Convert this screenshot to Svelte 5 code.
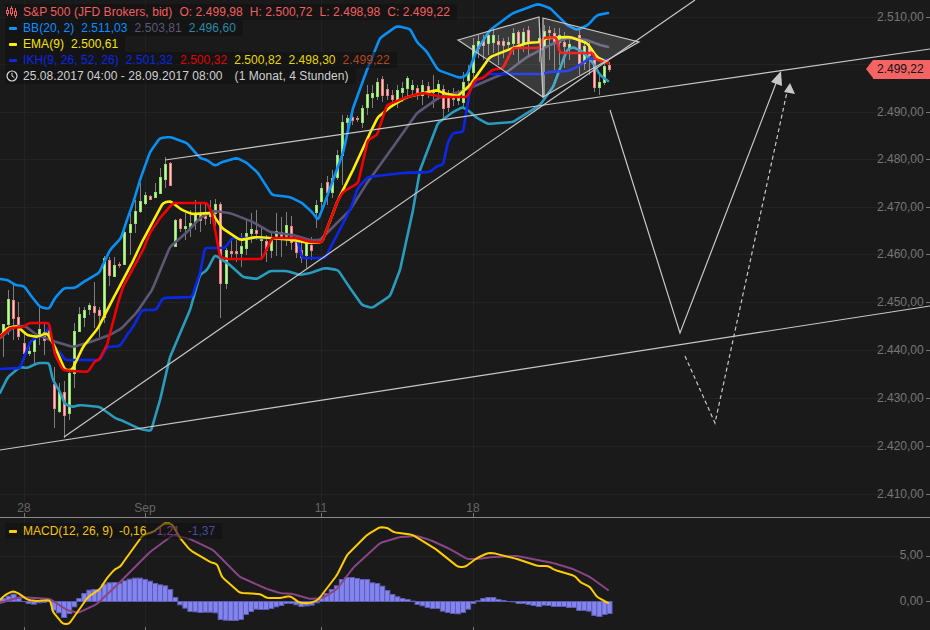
<script>
  const round = (a, d = 2.5) => {
    const o = [a[0]];
    for (let i = 1; i < a.length - 1; i++) {
      const [px, py] = a[i - 1];
      const [x, y] = a[i];
      const [nx, ny] = a[i + 1];
      const l0 = Math.hypot(x - px, y - py);
      const l1 = Math.hypot(nx - x, ny - y);
      const d0 = Math.min(d, l0 / 2) / l0;
      const d1 = Math.min(d, l1 / 2) / l1;
      o.push([x + (px - x) * d0, y + (py - y) * d0]);
      o.push([x, y].map((v, k) => (v * 2 + (k ? y + (py - y) * d0 + y + (ny - y) * d1 : x + (px - x) * d0 + x + (nx - x) * d1)) / 4));
      o.push([x + (nx - x) * d1, y + (ny - y) * d1]);
    }
    o.push(a[a.length - 1]);
    return o;
  };
  const pts = (a) => round(a).map((p) => p[0].toFixed(1) + ',' + p[1].toFixed(1)).join(' ');
  const cx = (i) => 3.3 + 5.05 * i;

  const bbUp = [[0,279],[8,280],[15,285],[24,286],[32,297],[40,307],[49,309],[55,298],[64,288],[75,288],[85,281],[99,273],[110,250],[121,238],[127,220],[134,200],[140,180],[150,152],[160,138],[170,137],[187,143],[200,158],[207,160],[215,166],[222,162],[237,158],[247,163],[258,173],[272,195],[290,197],[302,203],[312,212],[318,220],[322,210],[343,153],[353,108],[367,70],[380,38],[397,26],[410,29],[417,42],[427,52],[438,70],[460,78],[467,75],[477,50],[490,30],[513,13],[538,4],[550,8],[567,25],[577,30],[588,25],[597,15],[608,13]];
  const bbMid = [[0,338],[15,326],[25,326],[37,335],[53,341],[73,347],[90,342],[110,335],[122,328],[137,312],[152,290],[170,247],[187,232],[200,218],[213,211],[230,213],[253,222],[270,232],[293,235],[310,240],[320,240],[335,225],[350,210],[367,183],[393,147],[417,113],[440,97],[460,92],[477,85],[507,72],[527,57],[550,45],[567,38],[587,40],[600,45],[608,47]];
  const bbLow = [[0,393],[8,377],[20,367],[27,368],[38,363],[49,363],[53,380],[60,392],[65,404],[72,407],[80,405],[100,407],[115,418],[123,421],[140,429],[151,431],[160,400],[170,357],[190,310],[200,275],[207,270],[215,255],[230,265],[243,277],[257,279],[270,271],[287,271],[300,275],[310,273],[325,268],[338,270],[350,288],[362,305],[372,308],[390,296],[400,270],[413,210],[420,170],[438,123],[453,112],[463,107],[470,112],[477,118],[488,124],[513,122],[540,105],[553,87],[567,50],[573,47],[583,52],[593,63],[600,75],[608,81]];
  const ema = [[0,337],[7,328],[17,326],[27,335],[37,337],[47,333],[55,347],[65,370],[72,370],[83,347],[98,328],[115,295],[132,263],[143,240],[163,203],[170,201],[182,210],[192,214],[212,213],[222,228],[240,240],[257,237],[270,238],[293,240],[310,243],[322,242],[338,200],[353,170],[370,133],[378,117],[393,105],[407,97],[437,90],[443,93],[458,96],[470,85],[490,57],[513,48],[527,43],[540,42],[547,38],[570,37],[587,43],[597,57],[608,63]];
  const red = [[0,337],[10,328],[23,327],[29,323],[49,323],[55,355],[63,370],[73,371],[88,372],[95,361],[99,360],[107,345],[118,303],[123,287],[143,250],[150,233],[160,218],[173,203],[207,203],[212,213],[220,257],[227,259],[262,259],[272,238],[297,238],[310,242],[322,242],[338,200],[343,192],[358,183],[368,140],[377,135],[387,105],[407,97],[423,93],[443,97],[467,97],[475,80],[483,78],[492,70],[503,68],[513,48],[540,48],[543,38],[556,37],[560,53],[593,53],[595,59],[608,63]];
  const blueA = [[0,369],[20,368],[30,342],[37,337],[45,335],[49,327]];
  const blueB = [[55,352],[60,352],[65,360],[100,360],[107,347],[120,346],[127,335],[133,327],[142,310],[156,310],[163,298],[192,297],[200,273],[205,248],[225,248],[232,238],[297,238],[302,258],[325,258],[350,210],[358,188],[368,177],[403,173],[430,172],[437,166],[443,165],[448,142],[453,133],[463,132],[470,90],[477,80],[483,78],[488,74],[543,74],[548,72],[568,71],[577,67],[590,58],[608,60]];

  const candles = [
    [0,324,324,335,357,'g'],[1,290,299,324,335,'g'],[2,283,300,318,340,'r'],[3,302,317,336,340,'r'],[4,333,343,353,360,'r'],[5,346,351,353,356,'g'],[6,335,339,351,363,'g'],[7,307,329,335,345,'g'],[8,322,332,340,355,'r'],[9,325,327,333,340,'g'],
    [10,367,384,408,428,'r'],[11,383,392,411,413,'g'],[12,381,392,415,438,'r'],[13,370,373,413,420,'g'],[14,323,331,373,388,'g'],[15,307,314,331,332,'g'],[16,307,310,317,327,'g'],[17,303,305,309,315,'g'],[18,282,306,312,328,'r'],[19,307,310,315,337,'r'],
    [20,256,258,317,323,'g'],[21,257,260,275,286,'r'],[22,257,265,276,277,'g'],[23,262,264,265,268,'r'],[24,231,232,264,265,'g'],[25,213,224,232,255,'g'],[26,200,211,223,233,'g'],[27,183,201,211,213,'g'],[28,192,195,203,205,'g'],[29,195,196,199,200,'r'],
    [30,183,192,197,198,'g'],[31,168,177,193,194,'g'],[32,157,164,179,188,'g'],[33,162,163,185,186,'r'],[34,219,220,246,247,'g'],[35,218,219,228,232,'r'],[36,213,226,228,240,'g'],[37,210,223,227,237,'g'],[38,200,213,222,230,'g'],[39,202,213,220,232,'r'],
    [40,202,213,218,225,'r'],[41,200,212,216,224,'g'],[42,199,204,213,226,'g'],[43,202,204,283,318,'r'],[44,248,250,283,289,'g'],[45,240,251,253,258,'r'],[46,240,251,253,262,'r'],[47,233,246,253,267,'g'],[48,220,233,248,255,'g'],[49,213,229,233,243,'g'],
    [50,210,230,233,240,'r'],[51,227,238,240,260,'g'],[52,235,241,250,262,'r'],[53,231,240,250,258,'g'],[54,213,231,237,256,'g'],[55,217,232,236,257,'r'],[56,212,225,238,246,'g'],[57,216,226,242,250,'r'],[58,236,242,252,258,'r'],[59,243,250,257,263,'r'],
    [60,238,243,255,268,'g'],[61,237,245,250,260,'r'],[62,200,205,212,228,'g'],[63,183,188,201,210,'g'],[64,176,182,192,205,'r'],[65,170,178,192,198,'g'],[66,150,155,177,180,'g'],[67,115,122,155,185,'g'],[68,115,118,122,132,'g'],[69,112,117,120,125,'r'],
    [70,116,118,119,122,'r'],[71,105,108,122,128,'g'],[72,85,94,107,115,'g'],[73,85,93,97,108,'g'],[74,78,82,96,100,'g'],[75,76,79,95,102,'r'],[76,84,89,95,100,'r'],[77,90,95,99,105,'r'],[78,85,90,100,108,'g'],[79,82,88,92,102,'g'],
    [80,76,78,88,97,'g'],[81,80,85,89,96,'g'],[82,85,88,92,100,'r'],[83,80,85,95,105,'g'],[84,82,86,93,98,'r'],[85,75,90,92,108,'g'],[86,80,84,91,100,'g'],[87,85,89,108,118,'r'],[88,90,93,107,112,'r'],[89,88,95,99,106,'r'],
    [90,90,97,100,105,'g'],[91,72,82,102,108,'g'],[92,65,72,80,85,'g'],[93,38,45,72,80,'g'],[94,35,41,48,58,'g'],[95,35,40,45,60,'r'],[96,30,35,43,55,'g'],[97,28,35,42,53,'g'],[98,35,41,44,65,'r'],[99,38,41,45,58,'r'],
    [100,37,42,44,48,'g'],[101,28,33,43,55,'g'],[102,30,32,43,62,'r'],[103,28,32,43,52,'g'],[104,26,30,41,55,'r'],[106,30,38,42,62,'g'],[107,25,31,47,100,'g'],[108,26,30,32,60,'r'],[109,28,33,41,70,'r'],
    [110,28,35,42,65,'g'],[111,32,42,46,68,'r'],[112,36,44,48,60,'g'],[114,30,35,63,75,'r'],[115,40,46,63,70,'g'],[116,42,47,55,75,'r'],[117,55,60,87,92,'r'],[118,75,82,87,95,'g'],[119,62,66,82,85,'g'],[120,62,65,69,72,'r']
  ];

  const yTicks = [[2510,17],[2490,112],[2480,159],[2470,207],[2460,254],[2450,302],[2440,350],[2430,398],[2420,446],[2410,494]];
  const fmt = (v) => '2.' + String(v).slice(1) + ',00';
  const xTicks = [[24,'28'],[145,'Sep'],[321,'11'],[473,'18']];

  const macd = [[0,600],[5,595],[13,591],[18,593],[28,600],[37,601],[50,600],[53,612],[63,624],[69,624],[88,597],[100,589],[107,578],[115,569],[120,567],[127,557],[143,535],[153,532],[165,523],[172,524],[180,538],[190,550],[210,562],[217,564],[222,577],[240,593],[260,594],[267,598],[280,598],[290,596],[300,603],[310,603],[318,600],[337,575],[347,555],[367,535],[380,527],[388,528],[393,532],[413,535],[437,550],[458,567],[465,567],[477,558],[488,553],[493,553],[517,559],[538,566],[548,566],[555,570],[575,576],[580,582],[590,587],[597,597],[608,603]];
  const signal = [[0,603],[20,597],[50,599],[67,610],[78,613],[97,604],[120,582],[150,552],[173,535],[190,539],[213,550],[240,577],[267,589],[280,593],[293,594],[310,599],[323,598],[337,589],[353,568],[380,543],[400,537],[417,536],[430,540],[450,549],[467,559],[477,559],[493,557],[517,556],[553,563],[573,569],[590,577],[608,590]];
  const histA = [325,318,312,325,334,340,342,338,337,334,360,368,382,370,350,325,310,300,298,298,282,278,277,280,272,267,264,264,268,273,280,284,287,298,322,344,354,364,365,367,366,366,368,388,390,391,391,388,373,364,357,358,358,355,350,346,340,340,344,349,347,345];
  const histB = [338,320,310,298,287,268,262,262,265,268,268,278,280,288,301,313,320,325,328,333,343,347,352,355,355,363,367,370,371,367,357,340,332,325,322,322,328,331,334,335,340,340,343,346,349,345,346,349,349,349,352,352,361,361,363,376,379,373,370];
  const hist = [...histA, ...histB].map((y) => (y - 334) / 3);
</script>

<div class="chart">
  <div class="pane main">
    <svg width="930" height="517" viewBox="0 0 930 517">
      {#each yTicks as [, y]}<line class="grid" x1="0" x2="924" y1={y} y2={y} />{/each}
      <line class="grid" x1="0" x2="924" y1="64" y2="64" />
      {#each xTicks as [x]}<line class="grid" x1={x} x2={x} y1="0" y2="517" />{/each}

      {#each candles as [i, wt, t, b, wb, c]}
        <line class="wick" x1={Math.round(cx(i)) + 0.5} x2={Math.round(cx(i)) + 0.5} y1={wt} y2={wb} />
        <rect class={c === 'g' ? 'up' : 'down'} x={Math.round(cx(i)) - 0.5} y={t + 0.5} width="2" height={Math.max(b - t, 1)} />
      {/each}

      <polyline class="l" stroke="#5b5876" points={pts(bbMid)} />
      <polyline class="l" stroke="#2a9bbd" points={pts(bbLow)} />
      <polyline class="l" stroke="#0a90f5" points={pts(bbUp)} />
      <polyline class="l" stroke="#0b28e8" points={pts(blueA)} />
      <polyline class="l" stroke="#0b28e8" points={pts(blueB)} />
      <polyline class="l" stroke="#fff000" points={pts(ema)} />
      <polyline class="l" stroke="#f00000" points={pts(red)} />

      <polygon class="pat" points="458,40 539,17 543,97" />
      <polygon class="pat" points="543,18 639,42 543,97" />
      <line class="tr" x1="0" y1="450" x2="930" y2="306" />
      <line class="tr" x1="165" y1="160" x2="930" y2="49" />
      <line class="tr" x1="64" y1="437" x2="695" y2="0" />
      <polyline class="tr" points="610,110 680,333 778,78" />
      <polygon class="head" points="781,71 782,86 771,82" />
      <polyline class="tr dash" points="685,356 715,423 787,92" />
      <polygon class="head" points="790,83 795,94 784,92" />

      {#each yTicks as [v, y]}
        <text class="ax" x="877" y={y + 4}>{fmt(v)}</text>
        <line class="tick" x1="926" x2="930" y1={y} y2={y} />
      {/each}
      {#each xTicks as [x, label]}
        <text class="ax time" x={x} y="512" text-anchor="middle">{label}</text>
        <line class="tick" x1={x + 0.5} x2={x + 0.5} y1="513" y2="517" />
      {/each}
    </svg>

    <div class="legend">
      <div class="row">
        <svg class="ic" width="12" height="12" viewBox="0 0 12 12">
          <path d="M1.5 1v9M5.5 0v10M9.5 2v10" stroke="#f25f5f" fill="none" />
          <rect x="0.5" y="4.5" width="2" height="3" fill="#1a1a1a" stroke="#f25f5f" />
          <rect x="4.5" y="2.5" width="2" height="5" fill="#1a1a1a" stroke="#f25f5f" />
          <rect x="8.5" y="5.5" width="2" height="4" fill="#1a1a1a" stroke="#f25f5f" />
        </svg>
        <span class="c-s">S&amp;P 500 (JFD Brokers, bid)</span>
        <span class="c-s">O: 2.499,98</span><span class="c-s">H: 2.500,72</span><span class="c-s">L: 2.498,98</span><span class="c-s">C: 2.499,22</span>
      </div>
      <div class="row">
        <i class="dash-ic bb"></i>
        <span class="bb-t">BB(20, 2)</span><span class="bb-t">2.511,03</span><span class="mid-t">2.503,81</span><span class="low-t">2.496,60</span>
      </div>
      <div class="row">
        <i class="dash-ic em"></i>
        <span class="em-t">EMA(9)</span><span class="em-t">2.500,61</span>
      </div>
      <div class="row">
        <i class="dash-ic ik"></i>
        <span class="ik-t">IKH(9, 26, 52, 26)</span><span class="ik-t">2.501,32</span><span class="re-t">2.500,32</span><span class="ye-t">2.500,82</span><span class="ye-t">2.498,30</span><span class="or-t">2.499,22</span>
      </div>
      <div class="row">
        <svg class="ic" width="12" height="12" viewBox="0 0 12 12">
          <circle cx="6" cy="6" r="5" fill="none" stroke="#ddd" stroke-width="1.2" />
          <path d="M6 2.8V6l2.4 1.6" fill="none" stroke="#ddd" />
        </svg>
        <span class="dt">25.08.2017 04:00 - 28.09.2017 08:00</span><span class="dt sp">(1 Monat, 4 Stunden)</span>
      </div>
    </div>

    <div class="tag">2.499,22</div>
  </div>

  <div class="pane sub">
    <svg width="930" height="112" viewBox="0 518 930 112">
      <line class="grid" x1="0" x2="924" y1="556" y2="556" />
      {#each xTicks as [x]}<line class="grid" x1={x} x2={x} y1="518" y2="630" />{/each}
      {#each hist as h, i}
        {#if h !== 0}
          <rect class="bar" x={1 + 5.05 * i} y={h < 0 ? 601.5 + h : 601.5} width="5.05" height={Math.abs(h)} />
        {/if}
      {/each}
      <line class="zero" x1="0" x2="612" y1="601.5" y2="601.5" />
      <polyline class="m" stroke="#8a4585" points={pts(signal)} />
      <polyline class="m" stroke="#ffcc00" points={pts(macd)} />
      <text class="ax" x="923" y="559" text-anchor="end">5,00</text>
      <line class="tick" x1="926" x2="930" y1="556" y2="556" />
      <text class="ax" x="923" y="605" text-anchor="end">0,00</text>
      <line class="tick" x1="926" x2="930" y1="601" y2="601" />
      {#each xTicks as [x]}<line class="tick" x1={x + 0.5} x2={x + 0.5} y1="627" y2="630" />{/each}
    </svg>
    <div class="legend sublegend">
      <div class="row">
        <i class="dash-ic mc"></i>
        <span class="mc-t">MACD(12, 26, 9)</span><span class="mc-t">-0,16</span><span class="pu-t">-1,21</span><span class="in-t">-1,37</span>
      </div>
    </div>
  </div>
</div>

<style>
  :global(body) {
    margin: 0;
    background: #1a1a1a;
  }
  .chart {
    width: 930px;
    height: 630px;
    display: flex;
    flex-direction: column;
    background: #1a1a1a;
    font-family: "Liberation Sans", Arial, sans-serif;
    font-size: 12px;
    overflow: hidden;
  }
  .pane {
    position: relative;
  }
  .main {
    height: 517px;
    border-bottom: 1px solid #8a8a8a;
  }
  .sub {
    height: 112px;
  }
  svg {
    display: block;
  }
  .grid {
    stroke: #232323;
    stroke-width: 1;
    shape-rendering: crispEdges;
  }
  .wick {
    stroke: #7d7d7d;
    stroke-width: 1;
    shape-rendering: crispEdges;
  }
  .up {
    fill: #c0f8a0;
    stroke: #94dc6c;
    stroke-width: 1;
    shape-rendering: crispEdges;
  }
  .down {
    fill: #ffc4c4;
    stroke: #f08080;
    stroke-width: 1;
    shape-rendering: crispEdges;
  }
  .l,
  .m {
    fill: none;
    stroke-width: 2.6;
    stroke-linejoin: round;
    stroke-linecap: round;
  }
  .m {
    stroke-width: 2;
  }
  .tr {
    fill: none;
    stroke: #c8c8c8;
    stroke-width: 1.2;
  }
  .dash {
    stroke-dasharray: 4 3;
  }
  .pat {
    fill: rgba(255, 255, 255, 0.14);
    stroke: #c8c8c8;
    stroke-width: 1.2;
  }
  .head {
    fill: #c8c8c8;
  }
  .ax {
    fill: #767676;
    font-size: 12px;
  }
  .time {
    fill: #666;
  }
  .tick {
    stroke: #777;
    stroke-width: 1;
    shape-rendering: crispEdges;
  }
  .bar {
    fill: #8484ee;
    stroke: #5c5cb8;
    stroke-width: 1;
  }
  .zero {
    stroke: #5c5cb8;
    stroke-width: 1;
  }
  .legend {
    position: absolute;
    left: 5px;
    top: 4px;
    display: flex;
    flex-direction: column;
    align-items: flex-start;
    letter-spacing: 0.06px;
  }
  .sublegend {
    top: 5px;
    letter-spacing: 0;
  }
  .sublegend .row {
    gap: 6px;
  }
  .row {
    display: flex;
    align-items: center;
    gap: 7px;
    height: 16px;
    padding: 0 7px 0 1px;
    background: rgba(16, 16, 16, 0.55);
    white-space: nowrap;
  }
  .ic {
    width: 12px;
    height: 12px;
    margin-right: -2px;
    flex: none;
  }
  .dash-ic {
    display: block;
    width: 8px;
    height: 3px;
    margin: 0 -1px 0 3px;
    border-radius: 1px;
    flex: none;
  }
  .sublegend .dash-ic {
    margin-right: 0;
  }
  .bb { background: #0a95ff; }
  .em { background: #fff000; }
  .ik { background: #0b28e8; }
  .mc { background: #ffcc00; }
  .c-s { color: #f25f5f; }
  .bb-t { color: #0a8fff; }
  .mid-t { color: #5b5876; }
  .low-t { color: #2c88a8; }
  .em-t { color: #f5e600; }
  .ik-t { color: #0b28e8; }
  .re-t { color: #e00000; }
  .ye-t { color: #e8d800; }
  .or-t { color: #b0481c; }
  .dt { color: #d0d0d0; }
  .sp { margin-left: 5px; }
  .mc-t { color: #f5c400; }
  .pu-t { color: #803c80; }
  .in-t { color: #4a4aa0; margin-left: 2px; }
  .tag {
    position: absolute;
    left: 873px;
    top: 60px;
    width: 53px;
    height: 19px;
    padding-left: 4px;
    line-height: 19px;
    background: #f56464;
    color: #111;
  }
  .tag::before {
    content: "";
    position: absolute;
    left: -7px;
    top: 0;
    border-style: solid;
    border-width: 9.5px 7px 9.5px 0;
    border-color: transparent #f56464 transparent transparent;
  }
</style>
